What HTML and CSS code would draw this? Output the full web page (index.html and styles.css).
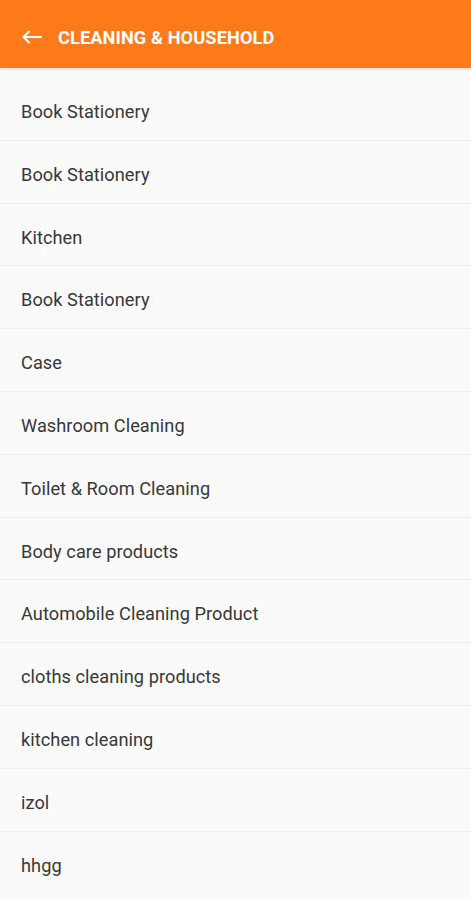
FILE: index.html
```html
<!DOCTYPE html>
<html lang="en">

<head>
    <meta charset="UTF-8">
    <title>Cleaning &amp; Household</title>
    <link rel="stylesheet" href="styles.css">
</head>

<body>
    <header class="app-bar">
        <svg class="back-icon" viewBox="0 0 20 14">
            <path d="M1.5 7H20M7.5 1L1.5 7l6 6" fill="none" stroke="#fff" stroke-width="2"/>
        </svg>
        <h1 class="title">CLEANING &amp; HOUSEHOLD</h1>
    </header>

    <ul class="category-list">
        <li>Book Stationery</li>
        <li>Book Stationery</li>
        <li>Kitchen</li>
        <li>Book Stationery</li>
        <li>Case</li>
        <li>Washroom Cleaning</li>
        <li>Toilet &amp; Room Cleaning</li>
        <li>Body care products</li>
        <li>Automobile Cleaning Product</li>
        <li>cloths cleaning products</li>
        <li>kitchen cleaning</li>
        <li>izol</li>
        <li>hhgg</li>
    </ul>
</body>

</html>
```

FILE: styles.css
```css
body,
html {
    margin: 0;
    padding: 0;
    background: #fafafa;
    font-family: Roboto, "Noto Sans", sans-serif;
}

.app-bar {
    display: flex;
    align-items: center;
    height: 68px;
    padding: 6px 0 0 22px;
    background: #ff7a1a;
    box-shadow: 0 1px 3px rgba(0, 0, 0, 0.15);
    box-sizing: border-box;
    position: relative;
    z-index: 1;
}

.back-icon {
    display: block;
    width: 20px;
    height: 14px;
    margin-right: 16px;
}

.title {
    margin: 0;
    color: #fff;
    font-size: 18.2px;
    font-weight: bold;
    letter-spacing: 0.1px;
}

.category-list {
    list-style: none;
    margin: 0;
    padding: 10px 0 0 0;
}

.category-list li {
    height: 62.8px;
    line-height: 56px;
    padding: 6px 0 0 21px;
    color: #383838;
    font-size: 18.2px;
    letter-spacing: 0.05px;
    border-bottom: 1px solid #efefef;
    box-sizing: border-box;
}

.category-list li:last-child {
    border-bottom: none;
}
```
